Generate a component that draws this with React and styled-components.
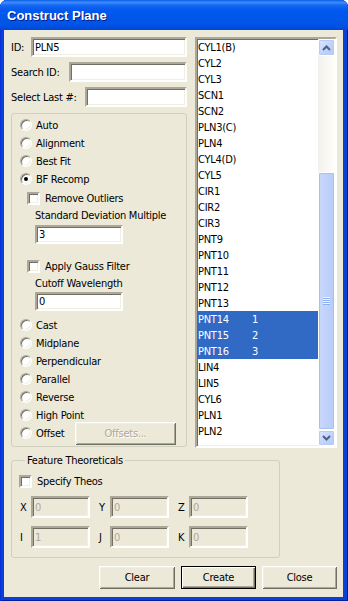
import React from 'react';
import styled, { createGlobalStyle } from 'styled-components';

const GlobalStyle = createGlobalStyle`
  html, body {
    margin: 0;
    padding: 0;
    background: #ffffff;
  }
  body {
    font-family: "DejaVu Sans Condensed", "DejaVu Sans", sans-serif;
    font-size: 11px;
    letter-spacing: -0.25px;
    color: #000;
  }
  * {
    box-sizing: border-box;
  }
`;

const Window = styled.div`
  width: 348px;
  height: 601px;
  display: flex;
  flex-direction: column;
  background: #0841d6;
  border-radius: 7px 7px 0 0;
  overflow: hidden;
  box-shadow: inset -1px 0 #001ea0, inset 1px 0 #0831d9, inset 0 -1px #001ea0;
`;

const TitleBar = styled.div`
  height: 30px;
  flex-shrink: 0;
  display: flex;
  align-items: center;
  padding-left: 7px;
  background: linear-gradient(
    to bottom,
    #0a5fe8 0%,
    #3c8cff 8%,
    #1667f2 18%,
    #0058ee 35%,
    #0055e8 80%,
    #0048d6 100%
  );
  color: #ffffff;
  font-family: "Liberation Sans", Arial, sans-serif;
  font-weight: bold;
  font-size: 13px;
  letter-spacing: 0;
  text-shadow: 1px 1px #0a1883;
`;

const Body = styled.div`
  flex: 1;
  margin: 0 5px 4px 4px;
  background: #ece9d8;
  padding: 7px 6px 0 7px;
  display: flex;
  flex-direction: column;
`;

const TopSection = styled.div`
  display: flex;
  gap: 8px;
  height: 411px;
`;

const LeftCol = styled.div`
  width: 176px;
  display: flex;
  flex-direction: column;
`;

const FieldRow = styled.div`
  display: flex;
  align-items: center;
  justify-content: space-between;
  height: 20px;
  margin-bottom: 5px;
`;

const sunken = `
  border: 2px solid;
  border-color: #aca899 #ffffff #ffffff #aca899;
  box-shadow: inset 1px 1px #716f64, inset -1px -1px #f1efe2;
`;

const TextInput = styled.div`
  ${sunken}
  width: ${(p) => p.$w}px;
  height: ${(p) => p.$h || 20}px;
  margin-left: ${(p) => p.$ml || 0}px;
  background: ${(p) => (p.$disabled ? '#ece9d8' : '#ffffff')};
  color: ${(p) => (p.$disabled ? '#aca899' : '#000')};
  padding-left: 2px;
  display: flex;
  align-items: center;
  flex-shrink: 0;
`;

const OptionsGroup = styled.div`
  margin-top: 1px;
  height: 334px;
  border: 1px solid #d0d0bf;
  border-radius: 3px;
  padding: 2px 10px 0 8px;
  display: flex;
  flex-direction: column;
`;

const OptionRow = styled.div`
  height: 18px;
  display: flex;
  align-items: center;
  gap: 4px;
  margin-top: ${(p) => p.$mt || 0}px;
  padding-left: ${(p) => p.$indent || 0}px;
`;

const RadioCircle = styled.span`
  width: 12px;
  height: 12px;
  border-radius: 50%;
  border: 1px solid;
  border-color: #aca899 #ffffff #ffffff #aca899;
  box-shadow: inset 1px 1px #716f64, inset -1px -1px #f1efe2;
  background: #ffffff;
  display: flex;
  align-items: center;
  justify-content: center;
  flex-shrink: 0;
  &::after {
    content: '';
    width: 4px;
    height: 4px;
    border-radius: 50%;
    background: ${(p) => (p.$checked ? '#000' : 'transparent')};
  }
`;

const CheckBox = styled.span`
  ${sunken}
  width: 13px;
  height: 13px;
  background: #ffffff;
  flex-shrink: 0;
  margin-right: 1px;
`;

const SubLabel = styled.div`
  height: 16px;
  display: flex;
  align-items: center;
  padding-left: 15px;
`;

const Button = styled.div`
  width: ${(p) => p.$w}px;
  height: 23px;
  background: #ece9d8;
  display: flex;
  align-items: center;
  justify-content: center;
  flex-shrink: 0;
  margin-left: ${(p) => (p.$push ? 'auto' : '0')};
  color: ${(p) => (p.$disabled ? '#aca899' : '#000')};
  text-shadow: ${(p) => (p.$disabled ? '1px 1px #ffffff' : 'none')};
  box-shadow: ${(p) =>
    p.$default
      ? 'inset 0 0 0 1px #000, inset 2px 2px #ffffff, inset -2px -2px #716f64, inset -3px -3px #aca899'
      : 'inset 1px 1px #ffffff, inset -1px -1px #716f64, inset 2px 2px #f1efe2, inset -2px -2px #aca899'};
`;

const ListBox = styled.div`
  ${sunken}
  width: 142px;
  height: 411px;
  background: #ffffff;
  display: flex;
`;

const ListItems = styled.div`
  flex: 1;
  overflow: hidden;
`;

const ListItem = styled.div`
  height: 16px;
  display: flex;
  align-items: center;
  padding-left: 1px;
  background: ${(p) => (p.$selected ? '#316ac5' : 'transparent')};
  color: ${(p) => (p.$selected ? '#ffffff' : '#000')};
`;

const ItemName = styled.span`
  width: 54px;
`;

const ScrollBar = styled.div`
  width: 17px;
  display: flex;
  flex-direction: column;
  background: linear-gradient(to right, #f3f1ec, #fefefb);
`;

const ScrollButton = styled.div`
  height: ${(p) => p.$h}px;
  border: 1px solid #ffffff;
  border-radius: 2px;
  background: linear-gradient(135deg, #dbe6fe 0%, #c3d4fc 50%, #b2c8f6 100%);
  box-shadow: inset 0 0 0 1px #b8cbf2;
  display: flex;
  align-items: center;
  justify-content: center;
`;

const Thumb = styled.div`
  margin-top: 116px;
  height: 258px;
  border: 1px solid #ffffff;
  border-radius: 2px;
  background: linear-gradient(to right, #c9d8fc, #c1d3fb 40%, #b7ccf8);
  box-shadow: inset 0 0 0 1px #a8c0f0;
  display: flex;
  align-items: center;
  justify-content: center;
`;

const Grip = styled.div`
  width: 7px;
  height: 8px;
  background: repeating-linear-gradient(
    to bottom,
    #eef4fe 0px,
    #eef4fe 1px,
    #8cb0f8 1px,
    #8cb0f8 2px
  );
`;

const FeatureGroup = styled.fieldset`
  margin: 6px 0 0 0;
  width: 269px;
  height: 104px;
  border: 1px solid #d0d0bf;
  border-radius: 3px;
  padding: 0 0 0 7px;
  display: flex;
  flex-direction: column;
`;

const Legend = styled.legend`
  padding: 0 2px;
  margin-left: 6px;
  line-height: 13px;
  font-size: 11px;
`;

const CoordCell = styled.div`
  display: flex;
  align-items: center;
  margin-right: 8px;
  & > span {
    width: 12px;
    padding-left: 1px;
  }
`;

const CoordRow = styled.div`
  display: flex;
  margin-top: ${(p) => p.$mt}px;
`;

const ButtonBar = styled.div`
  margin-top: 8px;
  display: flex;
  justify-content: flex-end;
  gap: 6px;
`;

const items = [
  'CYL1(B)', 'CYL2', 'CYL3', 'SCN1', 'SCN2', 'PLN3(C)', 'PLN4', 'CYL4(D)',
  'CYL5', 'CIR1', 'CIR2', 'CIR3', 'PNT9', 'PNT10', 'PNT11', 'PNT12', 'PNT13',
  'PNT14', 'PNT15', 'PNT16', 'LIN4', 'LIN5', 'CYL6', 'PLN1', 'PLN2',
];

const selected = { PNT14: '1', PNT15: '2', PNT16: '3' };

const Radio = ({ label, checked, mt }) => (
  <OptionRow $mt={mt}>
    <RadioCircle $checked={checked} />
    <span>{label}</span>
  </OptionRow>
);

const Arrow = ({ up }) => (
  <svg width="9" height="6" viewBox="0 0 9 6">
    <path
      d={up ? 'M1 5 L4.5 1.5 L8 5' : 'M1 1 L4.5 4.5 L8 1'}
      fill="none"
      stroke="#4d6185"
      strokeWidth="2"
    />
  </svg>
);

const Coord = ({ label, value }) => (
  <CoordCell>
    <span>{label}</span>
    <TextInput $w={59} $h={22} $disabled>
      {value}
    </TextInput>
  </CoordCell>
);

function App() {
  return (
    <Window>
      <GlobalStyle />
      <TitleBar>Construct Plane</TitleBar>
      <Body>
        <TopSection>
          <LeftCol>
            <FieldRow>
              <span>ID:</span>
              <TextInput $w={156}>PLN5</TextInput>
            </FieldRow>
            <FieldRow>
              <span>Search ID:</span>
              <TextInput $w={118} />
            </FieldRow>
            <FieldRow>
              <span>Select Last #:</span>
              <TextInput $w={102} />
            </FieldRow>

            <OptionsGroup>
              <Radio label="Auto" />
              <Radio label="Alignment" />
              <Radio label="Best Fit" />
              <Radio label="BF Recomp" checked />
              <OptionRow $indent={7} $mt={1}>
                <CheckBox />
                <span>Remove Outliers</span>
              </OptionRow>
              <SubLabel>Standard Deviation Multiple</SubLabel>
              <TextInput $w={88} $h={19} $ml={15} style={{ marginTop: 2 }}>
                3
              </TextInput>
              <OptionRow $indent={7} $mt={13}>
                <CheckBox />
                <span>Apply Gauss Filter</span>
              </OptionRow>
              <SubLabel>Cutoff Wavelength</SubLabel>
              <TextInput $w={88} $h={19} $ml={15} style={{ marginTop: 1 }}>
                0
              </TextInput>
              <Radio label="Cast" mt={5} />
              <Radio label="Midplane" />
              <Radio label="Perpendicular" />
              <Radio label="Parallel" />
              <Radio label="Reverse" />
              <Radio label="High Point" />
              <OptionRow>
                <RadioCircle />
                <span>Offset</span>
                <Button $w={101} $push $disabled>
                  Offsets...
                </Button>
              </OptionRow>
            </OptionsGroup>
          </LeftCol>

          <ListBox>
            <ListItems>
              {items.map((name) => (
                <ListItem key={name} $selected={!!selected[name]}>
                  <ItemName>{name}</ItemName>
                  {selected[name] && <span>{selected[name]}</span>}
                </ListItem>
              ))}
            </ListItems>
            <ScrollBar>
              <ScrollButton $h={17}>
                <Arrow up />
              </ScrollButton>
              <Thumb>
                <Grip />
              </Thumb>
              <ScrollButton $h={16}>
                <Arrow />
              </ScrollButton>
            </ScrollBar>
          </ListBox>
        </TopSection>

        <FeatureGroup>
          <Legend>Feature Theoreticals</Legend>
          <OptionRow $mt={5}>
            <CheckBox />
            <span>Specify Theos</span>
          </OptionRow>
          <CoordRow $mt={6}>
            <Coord label="X" value="0" />
            <Coord label="Y" value="0" />
            <Coord label="Z" value="0" />
          </CoordRow>
          <CoordRow $mt={8}>
            <Coord label="I" value="1" />
            <Coord label="J" value="0" />
            <Coord label="K" value="0" />
          </CoordRow>
        </FeatureGroup>

        <ButtonBar>
          <Button $w={76}>Clear</Button>
          <Button $w={75} $default>
            Create
          </Button>
          <Button $w={75}>Close</Button>
        </ButtonBar>
      </Body>
    </Window>
  );
}

export default App;
